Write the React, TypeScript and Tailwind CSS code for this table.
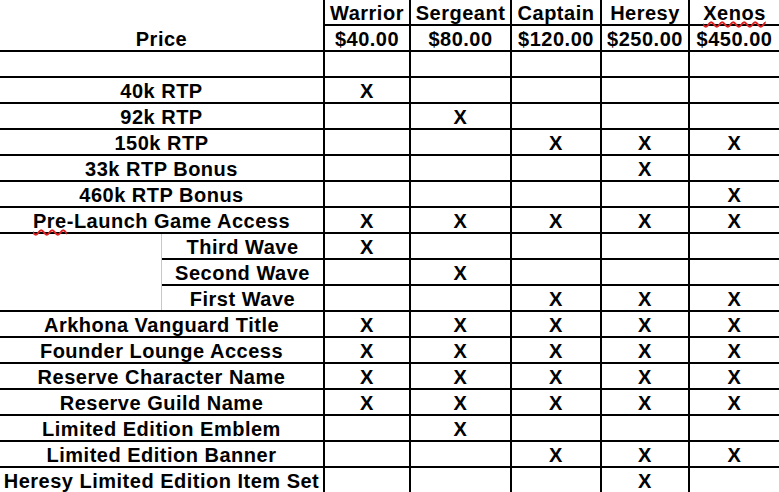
const cols = [
  { name: 'Warrior', price: '$40.00', w: 'w-[86px]' },
  { name: 'Sergeant', price: '$80.00', w: 'w-[101px]' },
  { name: 'Captain', price: '$120.00', w: 'w-[90px]' },
  { name: 'Heresy', price: '$250.00', w: 'w-[88px]' },
  { name: 'Xenos', price: '$450.00', w: 'flex-1' },
];

// W S C H X
type Row = { label: string; marks: string };

const topRows: Row[] = [
  { label: '', marks: '' },
  { label: '40k RTP', marks: 'W' },
  { label: '92k RTP', marks: 'S' },
  { label: '150k RTP', marks: 'CHX' },
  { label: '33k RTP Bonus', marks: 'H' },
  { label: '460k RTP Bonus', marks: 'X' },
  { label: 'Pre-Launch Game Access', marks: 'WSCHX' },
];

const waveRows: Row[] = [
  { label: 'Third Wave', marks: 'W' },
  { label: 'Second Wave', marks: 'S' },
  { label: 'First Wave', marks: 'CHX' },
];

const bottomRows: Row[] = [
  { label: 'Arkhona Vanguard Title', marks: 'WSCHX' },
  { label: 'Founder Lounge Access', marks: 'WSCHX' },
  { label: 'Reserve Character Name', marks: 'WSCHX' },
  { label: 'Reserve Guild Name', marks: 'WSCHX' },
  { label: 'Limited Edition Emblem', marks: 'S' },
  { label: 'Limited Edition Banner', marks: 'CHX' },
  { label: 'Heresy Limited Edition Item Set', marks: 'H' },
];

const keys = ['W', 'S', 'C', 'H', 'X'];

// spell-check style red wavy underline
const Squiggle = ({ children }: { children: React.ReactNode }) => (
  <span className="underline decoration-wavy decoration-[#e02020] decoration-[1.5px] underline-offset-[1px] [text-decoration-skip-ink:none]">
    {children}
  </span>
);

const Label = ({ text }: { text: string }) => {
  if (text === 'Pre-Launch Game Access') {
    return (
      <span>
        <Squiggle>Pre</Squiggle>-Launch Game Access
      </span>
    );
  }
  return <span>{text}</span>;
};

const Cells = ({ marks }: { marks: string }) => (
  <>
    {cols.map((c, i) => (
      <div
        key={c.name}
        className={`${c.w} h-full flex items-center justify-center pt-[2px] ${i < cols.length - 1 ? 'border-r-2 border-black' : ''}`}
      >
        {marks.includes(keys[i]) ? 'X' : ''}
      </div>
    ))}
  </>
);

const DataRow = ({ row }: { row: Row }) => (
  <div className="flex h-[26px] border-b-2 border-black">
    <div className="w-[325px] h-full flex items-center justify-center pt-[2px] border-r-2 border-black whitespace-nowrap">
      <Label text={row.label} />
    </div>
    <Cells marks={row.marks} />
  </div>
);

export default function App() {
  return (
    <div
      className="w-[779px] h-[492px] overflow-hidden bg-white text-black font-bold text-[20px] leading-[24px] tracking-[0.5px]"
      style={{ fontFamily: '"Liberation Sans", Arial, sans-serif' }}
    >
      {/* header: tier names */}
      <div className="flex h-[26px]">
        <div className="w-[325px] h-full border-r-2 border-black" />
        {cols.map((c, i) => (
          <div
            key={c.name}
            className={`${c.w} h-full flex items-center justify-center pt-[2px] border-b-2 border-black ${i < cols.length - 1 ? 'border-r-2' : ''}`}
          >
            {c.name === 'Xenos' ? <Squiggle>Xenos</Squiggle> : c.name}
          </div>
        ))}
      </div>
      {/* header: prices */}
      <div className="flex h-[26px] border-b-2 border-black">
        <div className="w-[325px] h-full flex items-center justify-center pt-[2px] border-r-2 border-black">Price</div>
        {cols.map((c, i) => (
          <div
            key={c.name}
            className={`${c.w} h-full flex items-center justify-center pt-[2px] ${i < cols.length - 1 ? 'border-r-2 border-black' : ''}`}
          >
            {c.price}
          </div>
        ))}
      </div>

      {topRows.map((r, i) => (
        <DataRow key={i} row={r} />
      ))}

      {/* pre-launch waves */}
      <div className="flex border-b-2 border-black">
        <div className="w-[162px] border-r border-[#c8c8c8]" />
        <div className="flex-1 flex flex-col">
          {waveRows.map((r, i) => (
            <div
              key={r.label}
              className={i < waveRows.length - 1 ? 'flex h-[26px] border-b-2 border-black' : 'flex h-[24px]'}
            >
              <div className="w-[163px] h-full flex items-center justify-center pt-[2px] border-r-2 border-black">
                {r.label}
              </div>
              <Cells marks={r.marks} />
            </div>
          ))}
        </div>
      </div>

      {bottomRows.map((r, i) => (
        <DataRow key={i} row={r} />
      ))}
    </div>
  );
}
